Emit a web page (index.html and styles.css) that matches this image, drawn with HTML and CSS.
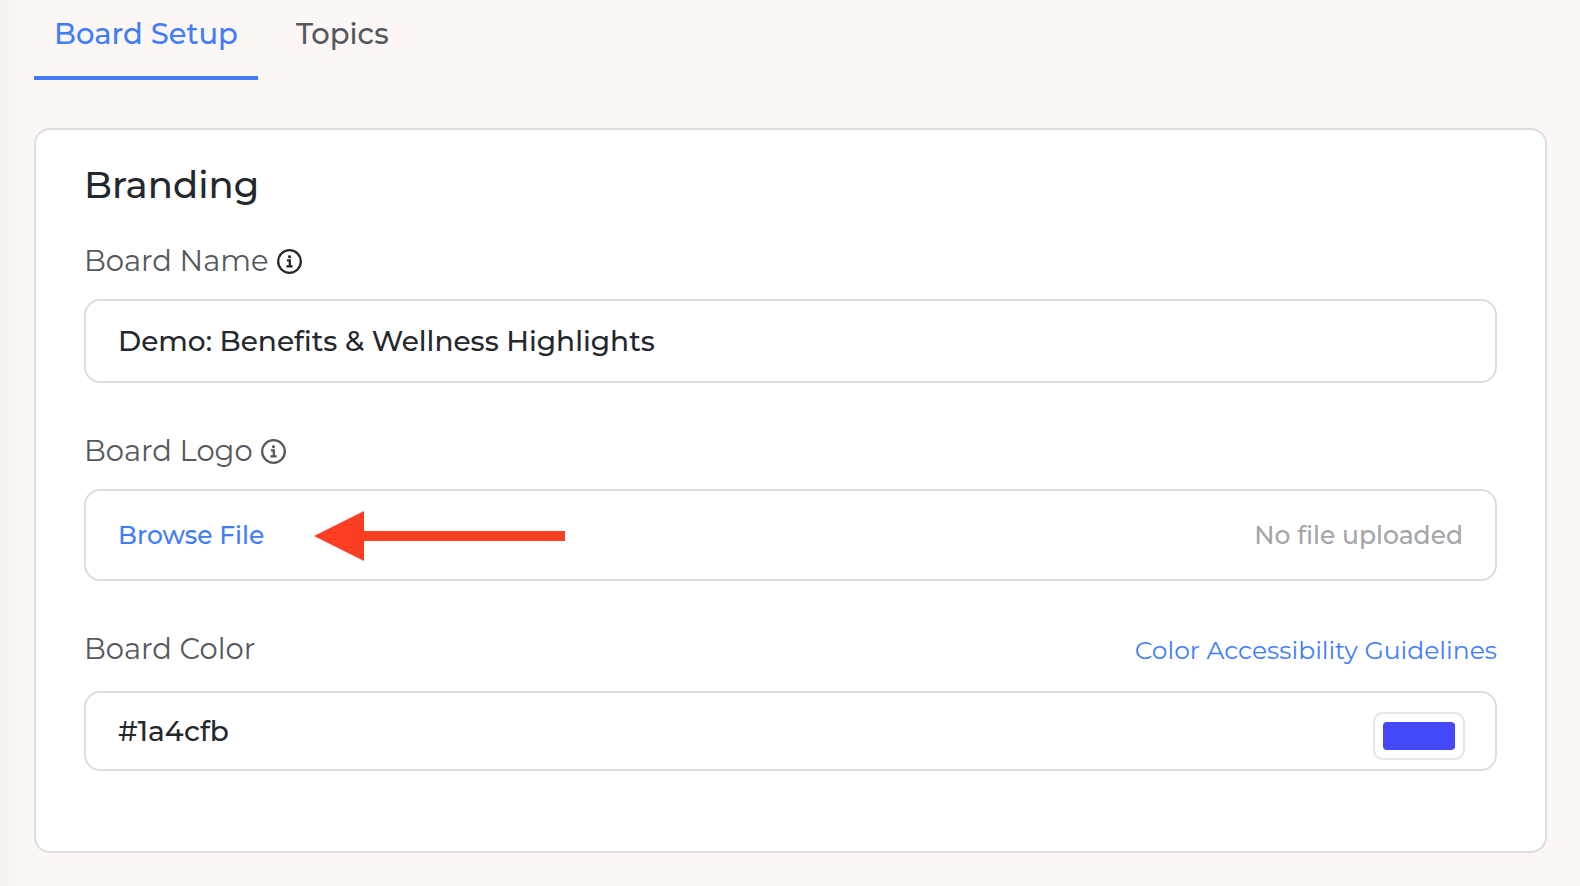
FILE: index.html
```html
<!DOCTYPE html>
<html lang="en">
  <head>
    <meta charset="utf-8">
    <title>Board Setup</title>
    <link rel="stylesheet" href="styles.css">
  </head>
  <body>
    <nav class="tabs">
      <a class="tab active" href="#setup">Board Setup</a>
      <a class="tab" href="#topics">Topics</a>
    </nav>
    <form class="card" id="setup">
      <h2>Branding</h2>

      <div class="field">
        <div class="field-head">
          <label for="board-name">Board Name</label>
          <svg class="info dark" viewBox="0 0 24 24">
            <circle cx="12" cy="12" r="10.9" />
            <path d="M9.5 11h2.8v5.5M9 16.7h6" />
            <rect x="10.6" y="6" width="2.8" height="2.8" rx="1" />
          </svg>
        </div>
        <input class="box name-box" type="text" id="board-name" value="Demo: Benefits &amp; Wellness Highlights">
      </div>

      <div class="field">
        <div class="field-head">
          <label for="browse">Board Logo</label>
          <svg class="info" viewBox="0 0 24 24">
            <circle cx="12" cy="12" r="10.9" />
            <path d="M9.5 11h2.8v5.5M9 16.7h6" />
            <rect x="10.6" y="6" width="2.8" height="2.8" rx="1" />
          </svg>
        </div>
        <div class="box file-box">
          <button type="button" id="browse">Browse File</button>
          <svg class="arrow" viewBox="0 0 251 50">
            <path d="M0 25L50 0v20h201v10H50v20z" />
          </svg>
          <span class="file-status">No file uploaded</span>
        </div>
      </div>

      <div class="field">
        <div class="field-head split">
          <label for="board-color">Board Color</label>
          <a class="guide" href="#guidelines">Color Accessibility Guidelines</a>
        </div>
        <div class="box color-box">
          <input class="hex" type="text" id="board-color" value="#1a4cfb">
          <input class="swatch" type="color" value="#4349fb" aria-label="Pick a color">
        </div>
      </div>
    </form>
  </body>
</html>
```

FILE: styles.css
```css
* {
    margin: 0;
    padding: 0;
    box-sizing: border-box;
}
html {
    background: #fcf7f5;
}
body {
    padding: 0 33px 33px 34px;
    background: linear-gradient(to right, #f7f1ef, #fcf7f5) no-repeat 0 0 / 28px 100%;
    font-family: Montserrat, Inter, sans-serif;
    font-size: 28px;
    color: #24282c;
}
a {
    color: #3f7dfb;
    text-decoration: none;
}
input, button {
    border: 0;
    outline: 0;
    background: none;
    font: inherit;
    color: inherit;
}
.tabs {
    display: flex;
    gap: 18px;
    height: 80px;
    margin-bottom: 48px;
}
.tab {
    padding: 14px 20px 0;
    font-size: 29px;
    font-weight: 500;
    line-height: 40px;
    color: #55595e;
}
.tab.active {
    border-bottom: 4px solid #3f7dfb;
    color: #3f7dfb;
}
.card {
    padding: 33px 48px 80px;
    border: 2px solid #dcdce1;
    border-radius: 16px;
    background: #fff;
}
h2 {
    margin-bottom: 32px;
    font-size: 37px;
    font-weight: 500;
    line-height: 44px;
}
.field + .field {
    margin-top: 46px;
}
.field-head {
    display: flex;
    align-items: center;
    gap: 8px;
    height: 44px;
    margin-bottom: 16px;
    font-size: 29px;
    line-height: 44px;
    color: #55595e;
}
.field-head.split {
    align-items: baseline;
    justify-content: space-between;
    margin-bottom: 20px;
}
.info {
    width: 25px;
    height: 25px;
    fill: none;
    stroke: #55595e;
    stroke-width: 2.2;
}
.info rect {
    fill: #55595e;
    stroke: none;
}
.info.dark {
    stroke: #24282c;
}
.info.dark rect {
    fill: #24282c;
}
.box {
    display: flex;
    align-items: center;
    width: 100%;
    padding: 0 32px;
    border: 2px solid #dcdce1;
    border-radius: 16px;
}
.name-box {
    height: 84px;
    font-weight: 500;
}
.file-box {
    position: relative;
    height: 92px;
    font-size: 25px;
    font-weight: 500;
}
#browse {
    color: #3f7dfb;
    cursor: pointer;
}
.arrow {
    position: absolute;
    top: 20px;
    left: 228px;
    width: 251px;
    height: 50px;
    fill: #fb3e22;
}
.file-status {
    margin-left: auto;
    color: #a3a6aa;
}
.guide {
    font-size: 25px;
}
.color-box {
    height: 80px;
    padding-right: 30px;
}
.hex {
    flex: 1;
    min-width: 0;
    font-weight: 500;
}
.swatch {
    width: 92px;
    height: 48px;
    margin-top: 10px;
    padding: 8px;
    border: 2px solid #e5e5e5;
    border-radius: 10px;
    cursor: pointer;
}
.swatch::-webkit-color-swatch-wrapper {
    padding: 0;
}
.swatch::-webkit-color-swatch {
    border: 0;
    border-radius: 4px;
}
```
